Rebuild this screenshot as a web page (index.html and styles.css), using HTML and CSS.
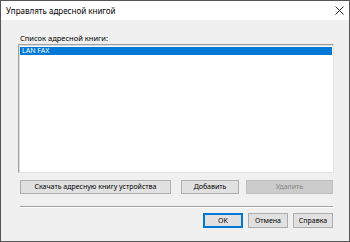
FILE: index.html
```html
<!DOCTYPE html>
<html lang="ru">
<head>
<meta charset="utf-8">
<link rel="stylesheet" href="styles.css">
</head>
<body>
<div class="window">
  <div class="titlebar">
    <span class="title">Управлять адресной книгой</span>
    <svg class="close" width="9" height="9" viewBox="0 0 9 9"><path d="M0.5 0.5 L8.5 8.5 M8.5 0.5 L0.5 8.5" stroke="#222" stroke-width="1"/></svg>
  </div>
  <div class="client">
    <div class="label">Список адресной книги:</div>
    <div class="listbox">
      <div class="item selected">LAN FAX</div>
    </div>
    <div class="row row-top">
      <button class="btn btn-download">Скачать адресную книгу устройства</button>
      <button class="btn btn-add">Добавить</button>
      <button class="btn btn-del" disabled>Удалить</button>
    </div>
    <div class="separator"></div>
    <div class="row row-bottom">
      <button class="btn btn-default">OK</button>
      <button class="btn">Отмена</button>
      <button class="btn">Справка</button>
    </div>
  </div>
</div>
</body>
</html>
```
FILE: styles.css
```css
html, body {
  margin: 0;
  padding: 0;
  background: #ffffff;
}
body {
  width: 350px;
  height: 242px;
  font-family: "Noto Sans", "Open Sans", sans-serif;
}
.window {
  box-sizing: border-box;
  width: 350px;
  height: 242px;
  border: 1px solid #555555;
  display: flex;
  flex-direction: column;
  background: #f0f0f0;
}
.titlebar {
  height: 19px;
  background: #ffffff;
  display: flex;
  align-items: center;
  justify-content: space-between;
  padding: 0 5px 0 5px;
}
.title {
  font-size: 8px;
  color: #000;
}
.close {
  margin-top: -1px;
}
.client {
  flex: 1;
  padding: 13px 16px 0 19px;
  display: flex;
  flex-direction: column;
}
.label {
  font-size: 7.5px;
  line-height: 11px;
  height: 11px;
  color: #000;
}
.listbox {
  box-sizing: border-box;
  height: 129px;
  margin: 0 -1px 0 -2px;
  background: #ffffff;
  border: 1px solid #a0a0a0;
  border-right-color: #e3e3e3;
  border-bottom-color: #e3e3e3;
  box-shadow: inset 1px 1px 0 #dcdcdc;
  padding: 2px 1px 0 1px;
}
.item {
  font-size: 7px;
  line-height: 8px;
  height: 8px;
  padding-left: 2px;
}
.selected {
  background: #0078d7;
  color: #ffffff;
}
.row {
  display: flex;
  gap: 7px;
}
.row-top {
  margin-top: 7px;
}
.btn {
  box-sizing: border-box;
  height: 14px;
  padding: 0;
  margin: 0;
  font-family: "Noto Sans", "Open Sans", sans-serif;
  font-size: 7px;
  line-height: 12px;
  color: #000;
  background: #e1e1e1;
  border: 1px solid #adadad;
  border-radius: 0;
}
.btn-download {
  width: 151px;
  margin-right: 3px;
}
.btn-add {
  width: 58px;
}
.btn-del {
  width: 87px;
  background: #cccccc;
  border-color: #bfbfbf;
  color: #838383;
}
.separator {
  margin-top: 12px;
  height: 1px;
  border-top: 1px solid #a0a0a0;
  background: #ffffff;
}
.row-bottom {
  margin-top: 5px;
  justify-content: flex-end;
  gap: 5px;
}
.row-bottom .btn {
  width: 40px;
  height: 15px;
}
.btn-default {
  border: 1px solid #0078d7;
  box-shadow: inset 0 0 0 1px #0078d7;
}
```
